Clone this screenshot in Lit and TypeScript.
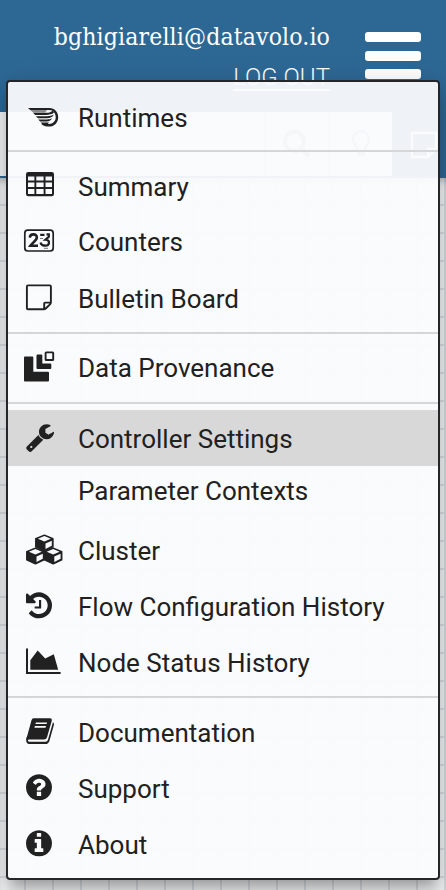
import { LitElement, html, svg, css } from "lit";
import { customElement } from "lit/decorators.js";
import { classMap } from "lit/directives/class-map.js";

const DISC =
  "m640 416q0 209-103 385.5t-279.5 279.5-385.5 103-385.5-103-279.5-279.5-103-385.5 103-385.5 279.5-279.5 385.5-103 385.5 103 279.5 279.5 103 385.5z";
const FA = "translate(23.83 12.2) scale(.01693)";

const cube = (x: number, y: number) => svg`
  <g transform="translate(${x} ${y})">
    <path d="M9.4 .8L17.9 4.2V12.3L9.4 16.3L.8 12.3V4.2Z" fill="#212121" stroke="#212121" stroke-width="1.5" stroke-linejoin="round"/>
    <path d="M9.4 1.7L15.8 4.3L9.4 7L2.9 4.3ZM10.5 9L16.8 6.3V11.4L10.5 14.6Z" fill="#fafbfe"/>
  </g>`;

const icons: Record<string, unknown> = {
  runtimes: svg`
    <path d="M28 20H49.4C54.6 20 58.2 24 58.2 29.2S54.4 38.6 49 38.6C45.6 38.6 43.4 37.8 41.4 36H49C53 35.800 55.700 33 55.700 29.200S53.200 22 49.400 22H30.200Z"/>
    <path d="M30.200 22H47L45 24.600H33.200Z" opacity=".5"/>
    <path d="M33 24.800H46C49.500 24.800 51.500 23.900 52.500 22.500L54 24.500C52.500 26.300 49 26.900 46 26.900H35.200ZM35.800 28.200H47C50 28.200 52 27.700 53.800 26.600C53 29.300 50 30.300 47 30.300H38ZM38.200 31.400H47C49 31.400 50.500 31.200 52 30.300C51 32.700 49 33.500 46.500 33.500H40.200ZM40.600 34.500H49L47.500 36.400H42.500Z"/>`,
  table: svg`
    <path fill-rule="evenodd" d="M28.3 14H51.7Q54 14 54 16.3V35.9Q54 38.2 51.7 38.2H28.3Q26 38.2 26 35.9V16.3Q26 14 28.3 14ZM28 18.4V22.6H34.4V18.4ZM36.3 18.4V22.6H43.6V18.4ZM45.5 18.4V22.6H52V18.4ZM28 24.6V29.1H34.4V24.6ZM36.3 24.6V29.1H43.6V24.6ZM45.5 24.6V29.1H52V24.6ZM28 31V36H34.4V31ZM36.3 31V36H43.6V31ZM45.5 31V36H52V31Z"/>`,
  counters: svg`
    <rect x="24.8" y="16.200" width="28.4" height="20.800" rx="3" fill="none" stroke="#212121" stroke-width="1.7"/>
    <path d="M29.8 23.600C30.2 19.2 37.2 19.4 36.8 23.800C36.6 26.2 32.6 28.5 30.4 31.8H38" fill="none" stroke="#212121" stroke-width="2.6"/>
    <path d="M40.2 20.800H44.500M46.500 20.400H48.800V22.800L45.5 25.6C50.5 25.8 49.8 31.7 45.5 31.7C42.8 31.7 41 30.8 40.6 28.5" fill="none" stroke="#212121" stroke-width="2.3"/>
    <path d="M40 24.5H43M44 34.3H48" stroke="#212121" stroke-width="1" opacity=".6"/>`,
  note: svg`
    <path fill="none" stroke="#212121" stroke-width="1.9" stroke-linejoin="round" d="M43.8 39.3H28Q26.9 39.3 26.9 38.2V16.5Q26.9 15.4 28 15.4H49.8Q50.9 15.4 50.9 16.5V32.5Q50.9 33.5 50 34.4L46 38.3Q45 39.3 43.8 39.3ZM44.2 39V33.6Q44.2 32.6 45.2 32.6H50.8"/>`,
  provenance: svg`
    <path d="M25 16.6H32.4Q33.3 16.6 33.3 17.5V31.700H48Q49 31.7 49 32.7V40.6Q49 41.6 48 41.6H25Q24 41.6 24 40.6V17.600Q24 16.6 25 16.6Z"/>
    <path d="M37.5 14.4H41.5Q42.3 14.4 42.3 15.2V23.4H50.2Q51.3 23.4 51.3 24.4V27.900Q51.3 28.9 50.3 28.9H37.5Q36.5 28.9 36.5 27.9V15.4Q36.5 14.4 37.5 14.4Z"/>
    <rect x="45.6" y="12.4" width="7.6" height="7.6" rx=".6" fill="none" stroke="#212121" stroke-width="1.9"/>`,
  wrench: svg`<path transform="translate(24.8 12) scale(.01693)" d="M448 1472q0-26-19-45t-45-19-45 19-19 45 19 45 45 19 45-19 19-45zm644-420l-682 682q-37 37-90 37-52 0-91-37l-106-108q-38-36-38-90 0-53 38-91l681-681q39 98 114.5 173.5t173.5 114.5zm634-435q0 39-23 106-47 134-164.5 217.5t-258.5 83.5q-185 0-316.5-131.5t-131.5-316.5 131.5-316.5 316.5-131.5q58 0 121.5 16.5t107.5 46.5q16 11 16 28t-16 28l-293 169v224l193 107q5-3 79-48.5t135.5-81 70.5-35.5q15 0 23.5 10t8.5 25z"/>`,
  cubes: svg`${cube(35, 12.4)}${cube(26, 25.4)}${cube(43.8, 25.4)}`,
  history: svg`<path transform=${FA} d="M1664 896q0 156-61 298t-164 245-245 164-298 61q-172 0-327-72.5t-264-204.5q-7-10-6.5-22.5t8.5-20.5l137-138q10-9 25-9 16 2 23 12 73 95 179 147t225 52q104 0 198.5-40.5t163.5-109.5 109.5-163.5 40.5-198.5-40.5-198.5-109.5-163.5-163.5-109.5-198.5-40.5q-98 0-188 35.5t-160 101.5l137 138q31 30 14 69-17 40-59 40h-448q-26 0-45-19t-19-45v-448q0-42 40-59 39-17 69 14l130 129q107-101 244.5-156.5t284.5-55.5q156 0 298 61t245 164 164 245 61 298zm-640-288v448q0 14-9 23t-23 9h-320q-14 0-23-9t-9-23v-64q0-14 9-23t23-9h224v-352q0-14 9-23t23-9h64q14 0 23 9t9 23z"/>`,
  area: svg`<path d="M26 14.4H28V37.9H60.6V40H26ZM30.3 35.8V26.3L37.7 16.6L45.2 24.6L53.8 20.3L58.2 35.8Z"/>`,
  book: svg`
    <path fill-rule="evenodd" d="M33.5 14.3H50Q52.3 14.6 51.7 16.9L47.1 33Q46.5 35.6 43.9 35.6H29.2Q27.7 35.7 27.9 36.8Q28.2 37.7 29.7 37.7H45.6Q47.3 37.7 47.9 36L52.6 19.5L52.9 18.2Q54.5 19.2 53.9 21L49.4 36.9Q48.4 40 45.4 40H29.2Q25.9 39.8 26.1 35.2Q26.1 33.7 27.2 32L31.5 16.3Q32.1 14.4 33.5 14.3ZM35.9 18.4L35.4 20.1H46.6L47.1 18.4ZM34.9 22L34.4 23.7H45.5L46 22Z"/>`,
  question: svg`<path transform=${FA} d="M1024 1376v-192q0-14-9-23t-23-9h-192q-14 0-23 9t-9 23v192q0 14 9 23t23 9h192q14 0 23-9t9-23zm256-672q0-88-55.5-163t-138.5-116-170-41q-243 0-371 213-15 24 8 42l132 100q7 6 19 6 16 0 25-12 53-68 86-92 34-24 86-24 48 0 85.5 26t37.5 59q0 38-20 61t-68 45q-63 28-115.5 86.5t-52.5 125.5v36q0 14 9 23t23 9h192q14 0 23-9t9-23q0-19 21.5-49.5t54.5-49.5q32-18 49-28.5t46-35 44.5-48 28-60.5 12.5-81zm384 192q0 209-103 385.5t-279.5 279.5-385.5 103-385.5-103-279.5-279.5-103-385.5 103-385.5 279.5-279.5 385.5-103 385.5 103 279.5 279.5 103 385.5z"/>`,
  info: svg`<path transform=${FA} d="M1152 1376v-160q0-14-9-23t-23-9h-96v-512q0-14-9-23t-23-9h-320q-14 0-23 9t-9 23v160q0 14 9 23t23 9h96v320h-96q-14 0-23 9t-9 23v160q0 14 9 23t23 9h448q14 0 23-9t9-23zm-128-896v-160q0-14-9-23t-23-9h-192q-14 0-23 9t-9 23v160q0 14 9 23t23 9h192q14 0 23-9t9-23z${DISC}"/>`,
};

interface Item {
  label: string;
  icon?: string;
  active?: boolean;
  shift?: "up" | "down";
}

const groups: Item[][] = [
  [{ label: "Runtimes", icon: "runtimes", shift: "down" }],
  [
    { label: "Summary", icon: "table" },
    { label: "Counters", icon: "counters", shift: "up" },
    { label: "Bulletin Board", icon: "note" },
  ],
  [{ label: "Data Provenance", icon: "provenance", shift: "up" }],
  [
    { label: "Controller Settings", icon: "wrench", active: true },
    { label: "Parameter Contexts", shift: "up" },
    { label: "Cluster", icon: "cubes" },
    { label: "Flow Configuration History", icon: "history" },
    { label: "Node Status History", icon: "area" },
  ],
  [
    { label: "Documentation", icon: "book" },
    { label: "Support", icon: "question" },
    { label: "About", icon: "info" },
  ],
];

@customElement("global-menu")
export class GlobalMenu extends LitElement {
  static styles = css`
    :host {
      display: block;
      box-sizing: border-box;
      border: 2px solid #262629;
      border-radius: 4px;
      background: rgba(250, 251, 253, 0.95);
      box-shadow: 0 10px 10px -6px rgba(0, 0, 0, 0.2), 0 16px 20px 2px rgba(0, 0, 0, 0.14),
        0 6px 28px 4px rgba(0, 0, 0, 0.12);
      font-family: Roboto, sans-serif;
      font-size: 26px;
      color: #212121;
    }
    .group {
      padding: 6px 0;
    }
    .group + .group {
      border-top: 2px solid #d5d6d8;
    }
    .item {
      display: flex;
      align-items: center;
      height: 56px;
      white-space: nowrap;
    }
    .active {
      background: #d8d8d8;
    }
    .plain {
      height: 50px;
      margin-bottom: 6px;
    }
    .icon {
      flex: none;
      width: 70px;
      height: 56px;
      fill: #212121;
    }
    .plain .label {
      padding-left: 70px;
    }
    .label {
      padding-top: 2px;
      line-height: 32px;
    }
    .up .label {
      padding-top: 0;
    }
    .down .label {
      padding-top: 4px;
    }
  `;

  render() {
    return groups.map(
      (group) => html`<div class="group">
        ${group.map(
          (item) => html`<div
            class=${classMap({
              item: true,
              active: !!item.active,
              plain: !item.icon,
              up: item.shift === "up",
              down: item.shift === "down",
            })}
          >
            ${item.icon ? html`<svg class="icon" viewBox="8 0 70 56">${icons[item.icon]}</svg>` : ""}
            <span class="label">${item.label}</span>
          </div>`
        )}
      </div>`
    );
  }
}

@customElement("app-root")
export class AppRoot extends LitElement {
  static styles = css`
    :host {
      display: flex;
      flex-direction: column;
      position: relative;
      height: 890px;
      overflow: hidden;
      font-family: Roboto, sans-serif;
      background: #fff;
    }
    .header {
      flex: none;
      box-sizing: border-box;
      height: 112px;
      padding: 16px 25px 0 0;
      display: flex;
      justify-content: flex-end;
      gap: 35px;
      background: #2d6894;
      color: #fff;
    }
    .user {
      display: flex;
      flex-direction: column;
      align-items: flex-end;
    }
    .email {
      height: 42px;
      line-height: 42px;
      font-family: "Roboto Slab", "DejaVu Serif Condensed", "DejaVu Serif", serif;
      font-size: 24.5px;
      letter-spacing: 0.15px;
      white-space: nowrap;
    }
    .logout {
      height: 31px;
      line-height: 38px;
      font-size: 24px;
      font-weight: 300;
      border-bottom: 2px solid #fff;
    }
    .burger {
      display: flex;
      flex-direction: column;
      gap: 8.5px;
      padding-top: 16px;
      width: 56px;
    }
    .bar {
      height: 10px;
      border-radius: 3px;
      background: #fff;
    }
    .toolbar {
      flex: none;
      display: flex;
      justify-content: flex-end;
      height: 64px;
      background: #f4f6f7;
      border-bottom: 2px solid #2d6894;
    }
    .tool {
      box-sizing: border-box;
      width: 64px;
      border-left: 2px solid #d0d6da;
      display: flex;
      align-items: center;
      justify-content: center;
    }
    .glyph {
      width: 32px;
      height: 32px;
      fill: none;
      stroke: #8f9ba1;
      stroke-width: 4;
    }
    .bulletin {
      width: 54px;
      height: 66px;
      background: #2d6894;
      border: 0;
      padding-left: 16px;
      justify-content: flex-start;
    }
    .bulletin .glyph {
      flex: none;
      stroke: #fff;
      stroke-width: 2.4;
    }
    .canvas {
      flex: 1;
      background-color: #f9fafb;
      background-image: linear-gradient(#dfe4e8 2px, transparent 2px),
        linear-gradient(90deg, #dfe4e8 2px, transparent 2px);
      background-size: 28px 28px;
      background-position: 24px 26px;
      box-shadow: inset 0 6px 8px -4px rgba(0, 0, 0, 0.3);
    }
    global-menu {
      position: absolute;
      left: 6px;
      top: 80px;
      width: 434px;
      height: 800px;
    }
  `;

  render() {
    return html`
      <div class="header">
        <div class="user">
          <div class="email">bghigiarelli@datavolo.io</div>
          <div class="logout">LOG OUT</div>
        </div>
        <div class="burger">
          <div class="bar"></div>
          <div class="bar"></div>
          <div class="bar"></div>
        </div>
      </div>
      <div class="toolbar">
        <div class="tool">
          <svg class="glyph" viewBox="0 0 32 32"><circle cx="13.5" cy="13.5" r="9.500" /><path d="M20.500 20.500L28 28" stroke-width="5" /></svg>
        </div>
        <div class="tool">
          <svg class="glyph" viewBox="0 0 32 32"><path d="M12 22C12 17 8 16 8 11A8 8 0 0 1 24 11C24 16 20 17 20 22" stroke-width="2" /><path d="M12 25H20" stroke-width="6" /></svg>
        </div>
        <div class="tool bulletin">
          <svg class="glyph" viewBox="0 0 32 32"><path d="M20 28H4V4H28V20ZM20 28V20H28" /></svg>
        </div>
      </div>
      <div class="canvas"></div>
      <global-menu></global-menu>
    `;
  }
}
